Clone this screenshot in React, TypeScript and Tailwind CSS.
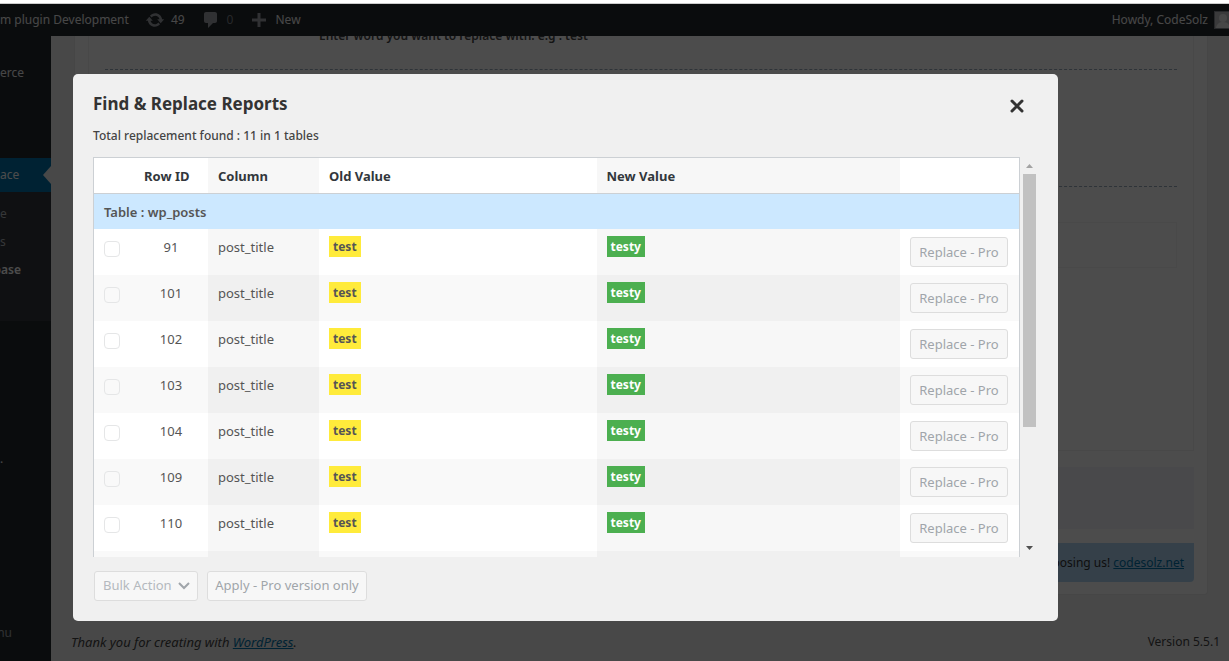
import React from 'react'

const rows = [91, 101, 102, 103, 104, 109, 110, 112, 113, 115, 116]

function AdminBar() {
  return (
    <header className="flex h-8 shrink-0 items-center bg-[#23282d] text-[12px] text-[#eee]">
      <a href="#site" className="whitespace-nowrap">m plugin Development</a>
      <a href="#updates" className="ml-4 flex items-center gap-[6px]">
        <svg viewBox="0 0 20 20" className="h-5 w-5 fill-[#a0a5aa]">
          <path d="M10.2 3.28c3.53 0 6.43 2.61 6.92 6h2.08l-3.5 4-3.5-4h2.32c-.45-1.97-2.21-3.45-4.32-3.45-1.45 0-2.73.71-3.54 1.78L4.95 5.66C6.23 4.2 8.11 3.28 10.2 3.28zm-.4 13.44c-3.52 0-6.43-2.61-6.92-6H.8l3.5-4c1.17 1.33 2.33 2.67 3.5 4H5.48c.45 1.97 2.21 3.45 4.32 3.45 1.45 0 2.73-.71 3.54-1.78l1.71 1.95c-1.28 1.46-3.15 2.38-5.25 2.38z" />
        </svg>
        <span>49</span>
      </a>
      <a href="#comments" className="ml-4 flex items-center gap-[6px]">
        <svg viewBox="0 0 20 20" className="h-5 w-5 fill-[#a0a5aa]">
          <path d="M5 2h9c1.1 0 2 .9 2 2v7c0 1.1-.9 2-2 2h-2l-5 5v-5H5c-1.1 0-2-.9-2-2V4c0-1.1.9-2 2-2z" />
        </svg>
        <span className="text-[#82878c]">0</span>
      </a>
      <a href="#new" className="ml-4 flex items-center gap-[6px]">
        <svg viewBox="0 0 20 20" className="h-5 w-5 fill-[#a0a5aa]">
          <path d="M17 8.5v3h-5.5V17h-3v-5.5H3v-3h5.5V3h3v5.5z" />
        </svg>
        <span>New</span>
      </a>
      <a href="#profile" className="ml-auto flex items-center gap-[6px] whitespace-nowrap">
        Howdy, CodeSolz
        <svg viewBox="0 0 15 18" className="h-[18px] w-[15px]">
          <rect width="20" height="18" fill="#82878c" />
          <rect x="1" y="1" width="18" height="16" fill="#c3c4c7" />
          <circle cx="9" cy="7" r="4" fill="#eee" />
          <path d="M2 17c1-5 4-6 7-6s6 1 7 6z" fill="#eee" />
        </svg>
      </a>
    </header>
  )
}

function Sidebar() {
  const item = 'flex h-[34px] items-center'
  const subItem = 'flex h-7 items-center'
  return (
    <nav className="w-[51px] shrink-0 overflow-hidden bg-[#23282d] pt-5 text-[12px] text-[#eee]">
      <a href="#commerce" className={item}>erce</a>
      <a href="#replace" className={`${item} relative mt-[68px] bg-[#0073aa] text-white`}>
        ace
        <span className="absolute top-2 right-0 border-y-[9px] border-r-8 border-y-transparent border-r-[#f1f1f1]" />
      </a>
      <div className="bg-[#32373c] pt-2 pb-[37px] text-[#b4b9be]">
        <a href="#one" className={subItem}>e</a>
        <a href="#two" className={subItem}>s</a>
        <a href="#base" className={`${subItem} w-[21px] justify-end font-semibold text-white`}>base</a>
      </div>
      <a href="#more" className={`${item} mt-[121px]`}>.</a>
      <a href="#menu" className={`${item} mt-[140px] w-3 justify-end text-[#a0a5aa]`}>nu</a>
    </nav>
  )
}

function PageContent() {
  return (
    <main className="flex min-w-0 flex-1 flex-col overflow-hidden bg-[#f1f1f1] text-[12px] text-[#444]">
      <div className="mr-[21px] ml-[23px] rounded-b border-x border-b border-[#e9e9e9] bg-white px-[13px] pb-3">
        <div className="border-x border-b border-[#f1f1f1] px-4 pb-[182px]">
          <p className="-mt-[10px] pl-[214px] leading-5 font-semibold">Enter word you want to replace with. e.g : test</p>
          <div className="mt-[23px] border-t border-dashed border-[#9ab]" />
          <div className="mt-[116px] border-t border-dashed border-[#9ab]" />
          <div className="mt-[35px] h-[46px] border border-[#f4f4f4]" />
        </div>
        <div className="mt-4 h-[62px] bg-[#f4f5fa]" />
        <p className="mt-[14px] rounded-b-sm bg-[#b3d7f5] px-[10px] text-right leading-[39px] text-[#333]">
          choosing us! <a href="#codesolz" className="text-[#0073aa] underline">codesolz.net</a>
        </p>
      </div>
      <footer className="mt-[37px] flex justify-between pr-[9px] pl-5 leading-5 text-[#444]">
        <p className="text-[13px] italic">
          Thank you for creating with <a href="#wordpress" className="text-[#0073aa] underline">WordPress</a>.
        </p>
        <p>Version 5.5.1</p>
      </footer>
    </main>
  )
}

function ReportTable() {
  const head = 'border-b border-[#ccd0d4] px-[10px] text-left font-bold text-[#32373c]'
  return (
    <table className="w-full table-fixed border-separate border-spacing-0 border border-b-0 border-[#ccd0d4] bg-white text-[13px] leading-5 text-[#555]">
      <colgroup>
        <col className="w-10" />
        <col className="w-[74px]" />
        <col className="w-[12%]" />
        <col className="w-[30%]" />
        <col />
        <col className="w-[119px]" />
      </colgroup>
      <thead>
        <tr className="h-9">
          <th className={head} aria-label="Select" />
          <th className={`${head} whitespace-nowrap`}>Row ID</th>
          <th className={`${head} bg-[#f7f7f7]`}>Column</th>
          <th className={head}>Old Value</th>
          <th className={`${head} bg-[#f7f7f7]`}>New Value</th>
          <th className={head} aria-label="Action" />
        </tr>
      </thead>
      <tbody>
        <tr className="h-[35px] bg-[#cce8ff]">
          <td colSpan={6} className="px-[10px] font-semibold">Table : wp_posts</td>
        </tr>
        {rows.map((id) => (
          <tr key={id} className="group h-[46px] align-top even:bg-white odd:bg-[#f9f9f9]">
            <td className="px-[10px] pt-3">
              <input
                type="checkbox"
                disabled
                aria-label={`Select row ${id}`}
                className="block h-4 w-4 appearance-none rounded border border-[#e5e6e7] bg-transparent"
              />
            </td>
            <td className="pt-2 text-center">{id}</td>
            <td className="bg-[#f7f7f7] px-[10px] pt-2 group-odd:bg-[#f0f0f0]">post_title</td>
            <td className="px-[10px] pt-[7px] text-[12px]">
              <span className="inline-block bg-[#ffeb3b] px-1 leading-[21px] font-bold">test</span>
            </td>
            <td className="bg-[#f7f7f7] px-[10px] pt-[7px] text-[12px] group-odd:bg-[#f0f0f0]">
              <span className="inline-block bg-[#4caf50] px-1 leading-[21px] font-bold text-white">testy</span>
            </td>
            <td className="px-[10px] pt-2">
              <button type="button" disabled className="h-[30px] w-[98px] rounded-[3px] border border-[#ddd] bg-[#f7f7f7] whitespace-nowrap text-[#a0a5aa]">
                Replace - Pro
              </button>
            </td>
          </tr>
        ))}
      </tbody>
    </table>
  )
}

function ReportDialog() {
  return (
    <section role="dialog" aria-labelledby="report-title" className="mt-[70px] mr-[171px] mb-10 ml-[73px] rounded-[5px] bg-[#f0f0f0] px-5 pt-5 pb-5">
      <div className="flex justify-between">
        <h2 id="report-title" className="text-[17px] leading-5 font-bold text-[#333]">Find &amp; Replace Reports</h2>
        <button type="button" aria-label="Close" className="mr-[14px] text-[#333]">
          <svg viewBox="0 0 14 14" className="mt-1 h-[14px] w-[14px]" fill="none" stroke="currentColor" strokeWidth="3" strokeLinecap="round">
            <path d="M2 2l10 10M12 2L2 12" />
          </svg>
        </button>
      </div>
      <p className="mt-3 text-[12px] leading-5 font-medium text-[#444]">Total replacement found : 11 in 1 tables</p>
      <div className="mt-[11px] flex h-[400px]">
        <div className="min-w-0 flex-1 overflow-y-auto [scrollbar-width:none]">
          <ReportTable />
        </div>
        <div className="ml-[3px] flex w-[13px] flex-col items-center pt-[7px] pb-[7px]" aria-hidden="true">
          <svg viewBox="0 0 7 4" className="h-1 w-[7px] fill-[#a3a3a3]"><path d="M0 4l3.5-4L7 4z" /></svg>
          <div className="mt-[6px] h-[253px] w-full bg-[#c1c1c1]" />
          <svg viewBox="0 0 7 4" className="mt-auto h-1 w-[7px] fill-[#505050]"><path d="M0 0l3.5 4L7 0z" /></svg>
        </div>
        <div className="w-[2px]" />
      </div>
      <div className="mt-[14px] flex gap-[9px] pl-px text-[13px]">
        <div className="relative">
          <select disabled aria-label="Bulk action" className="h-[30px] w-[104px] appearance-none rounded-[3px] border border-[#ddd] bg-[#f7f7f7] pl-2 text-[#b4b9be] opacity-100">
            <option>Bulk Action</option>
          </select>
          <svg viewBox="0 0 12 8" className="pointer-events-none absolute top-[11px] right-2 h-2 w-3" fill="none" stroke="#a0a5aa" strokeWidth="2">
            <path d="M1 1l5 5 5-5" />
          </svg>
        </div>
        <button type="button" disabled className="h-[30px] w-40 rounded-[3px] border border-[#ddd] bg-[#f7f7f7] whitespace-nowrap text-[#a0a5aa]">
          Apply - Pro version only
        </button>
      </div>
    </section>
  )
}

export default function App() {
  return (
    <div className="flex h-screen flex-col overflow-hidden bg-white font-['Noto_Sans','Open_Sans',sans-serif]">
      <div className="h-1 shrink-0 border-b border-[#ccc]" />
      <div className="relative flex min-h-0 flex-1 flex-col">
        <AdminBar />
        <div className="flex min-h-0 flex-1">
          <Sidebar />
          <PageContent />
        </div>
        <div className="absolute inset-0 overflow-hidden bg-black/70">
          <ReportDialog />
        </div>
      </div>
    </div>
  )
}
